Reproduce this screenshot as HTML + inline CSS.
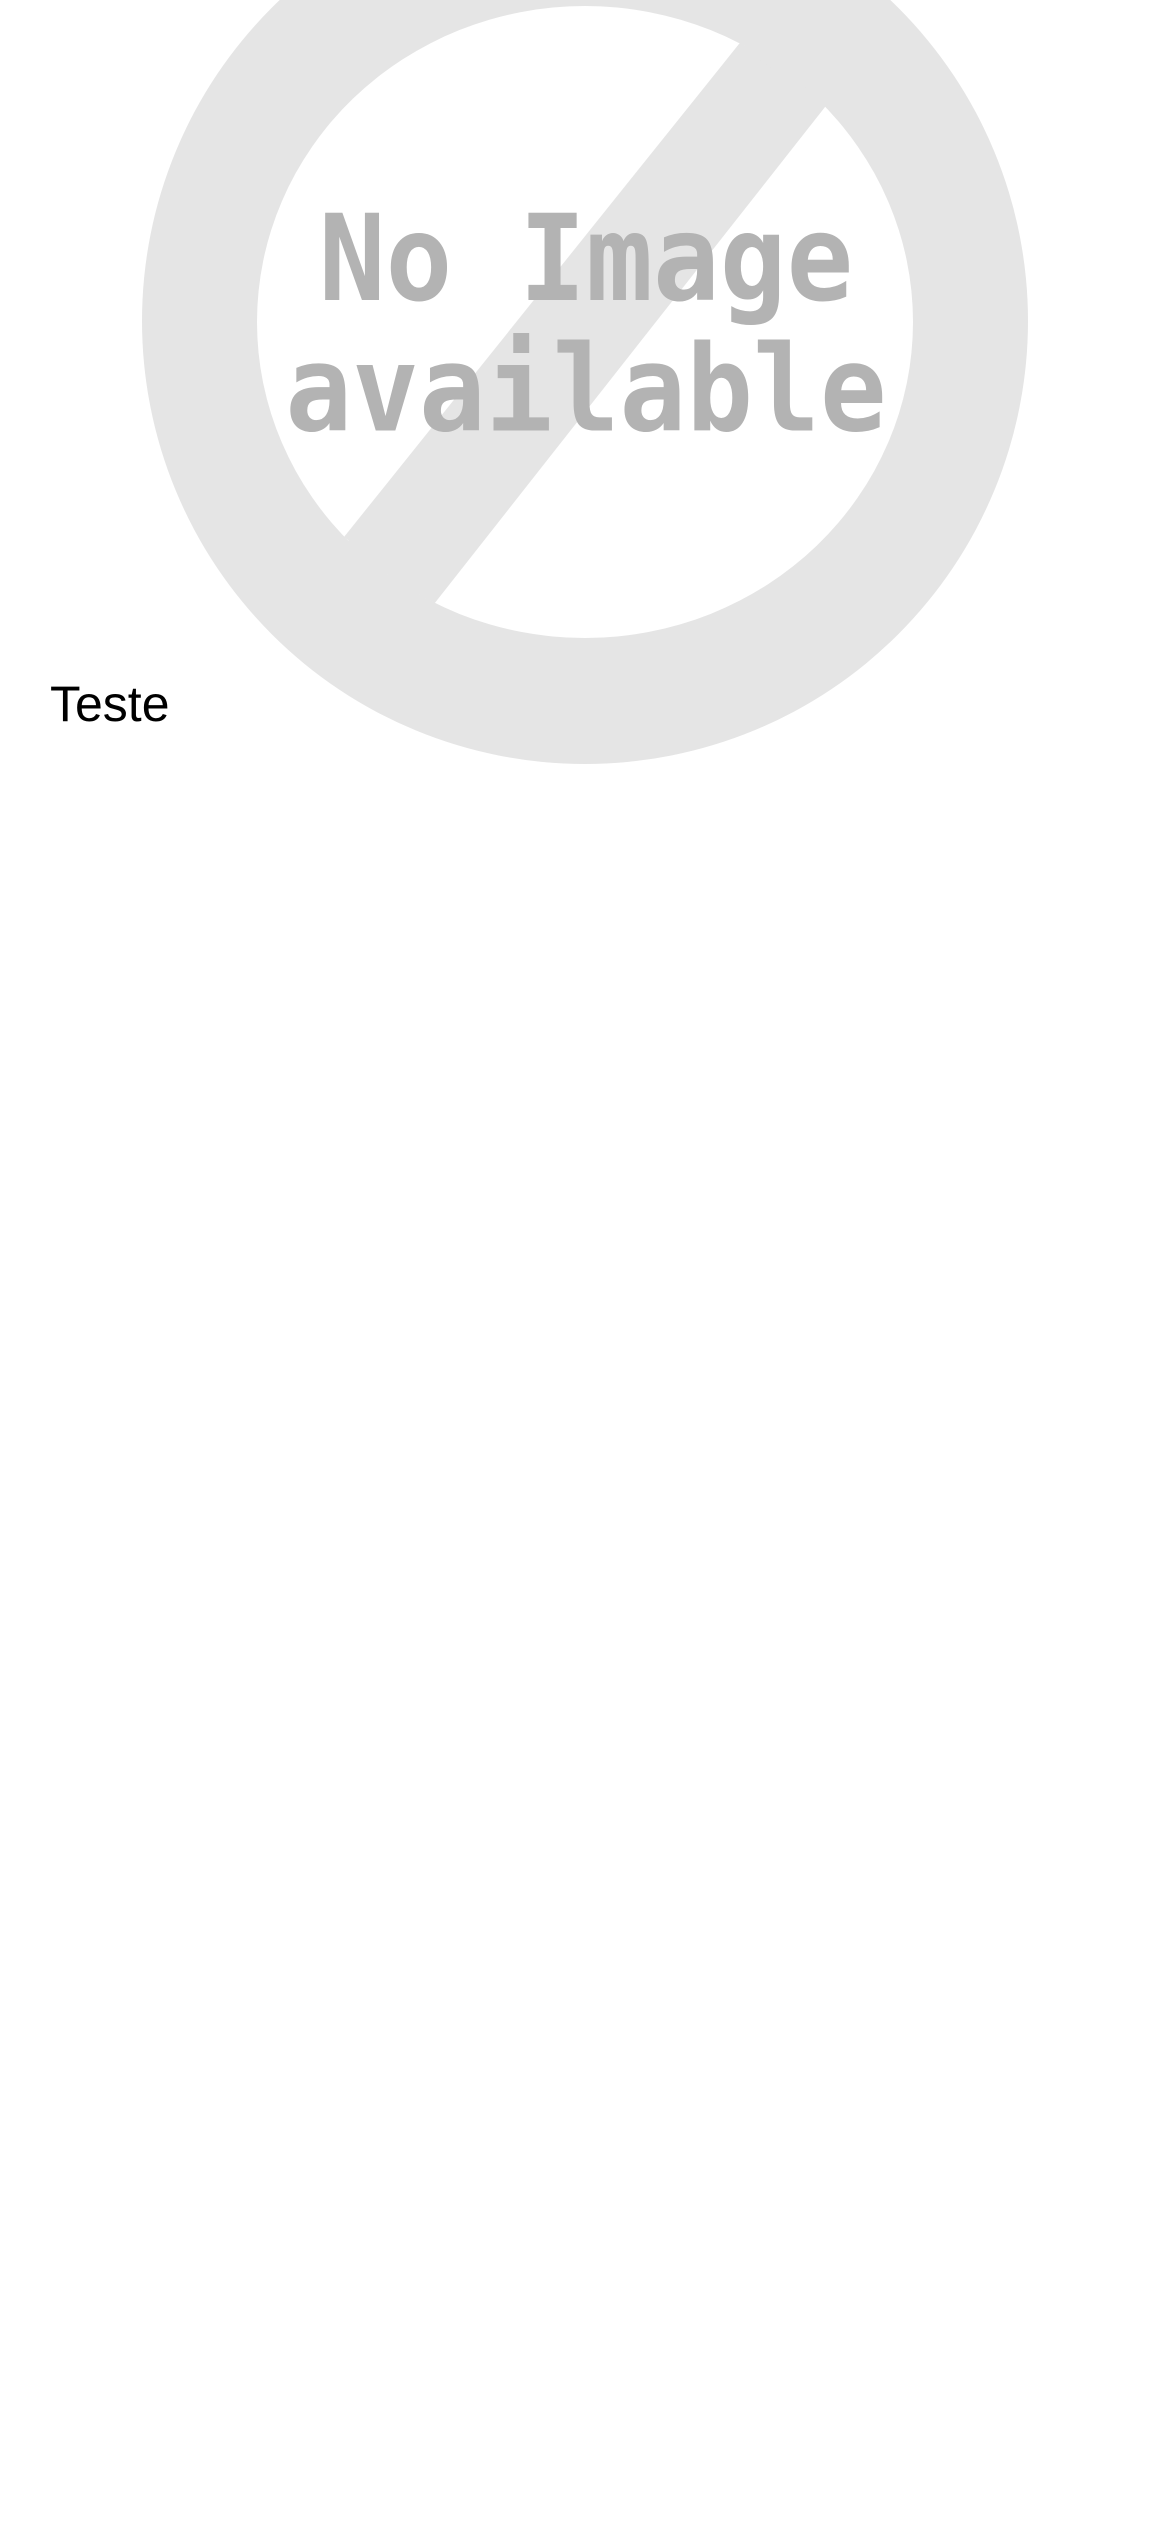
<!DOCTYPE html>
<html><head><meta charset="utf-8"><style>
html,body{margin:0;padding:0;background:#fff;width:1170px;height:2532px;overflow:hidden}
svg{position:absolute;left:0;top:0}
.t{position:absolute;left:50px;top:674px;font-family:"Liberation Sans",sans-serif;font-size:50px;line-height:60px;color:#000}
</style></head><body>
<svg width="1170" height="800" viewBox="0 0 1170 800">
<defs><clipPath id="c"><ellipse cx="585" cy="322" rx="329" ry="316"/></clipPath></defs>
<circle cx="585" cy="321" r="443" fill="#e5e5e5"/>
<ellipse cx="585" cy="322" rx="328" ry="316" fill="#fff"/>
<g clip-path="url(#c)"><polygon points="780,-8 884,32 390,660 286,620" fill="#e5e5e5"/>
<polygon points="739,44 824,108 430,601 344,537" fill="#e5e5e5"/></g>
<g transform="translate(0,300) scale(1,1.08) translate(0,-300)">
<text x="586" y="300" text-anchor="middle" font-family="DejaVu Sans Mono,Liberation Mono,monospace" font-weight="bold" font-size="111" fill="#b3b3b3">No Image</text>
<text x="586" y="421" text-anchor="middle" font-family="DejaVu Sans Mono,Liberation Mono,monospace" font-weight="bold" font-size="111" fill="#b3b3b3">available</text>
</g>
</svg>
<div class="t">Teste</div>
</body></html>
